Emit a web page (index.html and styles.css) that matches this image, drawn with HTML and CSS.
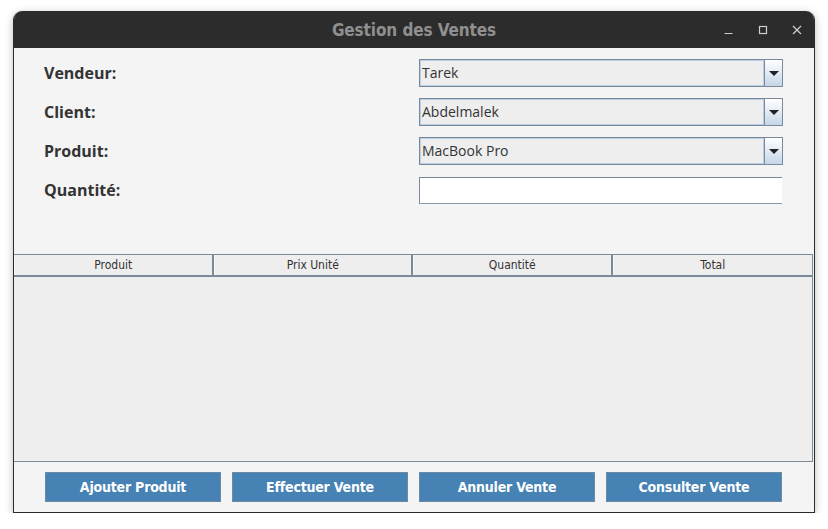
FILE: index.html
```html
<!DOCTYPE html>
<html lang="fr">
<head>
<meta charset="utf-8">
<title>Gestion des Ventes</title>
<link rel="stylesheet" href="styles.css">
</head>
<body>
<div class="window">
  <div class="titlebar">
    <span class="title">Gestion des Ventes</span>
    <div class="controls">
      <svg class="ctl" width="12" height="12" viewBox="0 0 12 12"><path d="M1.5 9.5h8" stroke="#cfcfcf" stroke-width="1.2"/></svg>
      <svg class="ctl" width="12" height="12" viewBox="0 0 12 12"><rect x="2.5" y="2.5" width="7" height="7" fill="none" stroke="#cfcfcf" stroke-width="1.2"/></svg>
      <svg class="ctl" width="12" height="12" viewBox="0 0 12 12"><path d="M2 2l8 8M10 2l-8 8" stroke="#cfcfcf" stroke-width="1.2"/></svg>
    </div>
  </div>
  <div class="content">
    <div class="form">
      <label class="lbl">Vendeur:</label>
      <div class="combo"><span class="combo-val">Tarek</span><span class="combo-btn"><span class="tri"></span></span></div>
      <label class="lbl">Client:</label>
      <div class="combo"><span class="combo-val">Abdelmalek</span><span class="combo-btn"><span class="tri"></span></span></div>
      <label class="lbl">Produit:</label>
      <div class="combo"><span class="combo-val">MacBook Pro</span><span class="combo-btn"><span class="tri"></span></span></div>
      <label class="lbl">Quantité:</label>
      <div class="field"></div>
    </div>
    <div class="table">
      <div class="thead">
        <div class="th">Produit</div>
        <div class="th">Prix Unité</div>
        <div class="th">Quantité</div>
        <div class="th">Total</div>
      </div>
      <div class="tbody"></div>
    </div>
    <div class="buttons">
      <button class="btn">Ajouter Produit</button>
      <button class="btn">Effectuer Vente</button>
      <button class="btn">Annuler Vente</button>
      <button class="btn">Consulter Vente</button>
    </div>
  </div>
</div>
</body>
</html>
```
FILE: styles.css
```css
html, body {
  margin: 0;
  padding: 0;
  background: #ffffff;
}
body {
  padding: 11px 0 0 13px;
  font-family: "Open Sans", sans-serif;
}
.window {
  width: 802px;
  height: 502px;
  box-sizing: border-box;
  border-radius: 9px 9px 0 0;
  background: #f4f4f4;
  border: 1px solid #2b2b2b;
  border-top: none;
  box-shadow: 0 2px 8px rgba(0,0,0,0.25);
  display: flex;
  flex-direction: column;
  overflow: hidden;
}
.titlebar {
  height: 37px;
  background: #2c2c2c;
  display: flex;
  align-items: center;
  justify-content: center;
  position: relative;
  margin: 0 -1px;
}
.title {
  font-family: "DejaVu Sans Condensed", "DejaVu Sans", sans-serif;
  font-weight: bold;
  font-size: 17px;
  color: #8f8f8f;
  letter-spacing: -0.1px;
}
.controls {
  position: absolute;
  right: 12px;
  top: 13px;
  display: flex;
  gap: 22px;
}
.ctl { display: block; }
.content {
  flex: 1;
  display: flex;
  flex-direction: column;
}
.form {
  display: grid;
  grid-template-columns: 375px 364px;
  grid-auto-rows: 28px;
  row-gap: 11px;
  padding: 11px 0 0 30px;
  align-items: center;
}
.lbl {
  font-weight: bold;
  font-size: 16px;
  color: #333333;
}
.combo {
  height: 28px;
  box-sizing: border-box;
  border: 1px solid #7a8a9b;
  display: flex;
  background: #eeeeee;
}
.combo-val {
  flex: 1;
  border: 1px solid #b8cfe5;
  font-size: 14px;
  color: #333333;
  line-height: 24px;
  padding-left: 1px;
}
.combo-btn {
  width: 17px;
  border-left: 1px solid #7a8a9b;
  background: linear-gradient(#ffffff, #c5d6e8);
  display: flex;
  align-items: center;
  justify-content: center;
}
.tri {
  width: 0;
  height: 0;
  border-left: 5px solid transparent;
  border-right: 5px solid transparent;
  border-top: 5px solid #222222;
}
.field {
  height: 27px;
  box-sizing: border-box;
  background: #ffffff;
  border-top: 1px solid #7a8a9b;
  border-left: 1px solid #7a8a9b;
  border-bottom: 1px solid #8a9aab;
  margin-right: 1px;
}
.table {
  margin-top: 50px;
  height: 207px;
  display: flex;
  flex-direction: column;
  border-right: 1px solid #7a8a9b;
  border-bottom: 1px solid #7a8a9b;
  margin-right: 1px;
}
.thead {
  display: grid;
  grid-template-columns: repeat(4, 1fr);
  height: 23px;
  box-sizing: border-box;
  border-top: 1px solid #7a8a9b;
  border-bottom: 2px solid #7a8a9b;
  background: #eeeeee;
}
.th {
  font-family: "DejaVu Sans Condensed", "DejaVu Sans", sans-serif;
  font-size: 12px;
  color: #333333;
  text-align: center;
  line-height: 20px;
  border-right: 2px solid #7a8a9b;
  border-left: 1px solid #f8f8f8;
}
.th:last-child { border-right: none; }
.tbody {
  flex: 1;
  background: #eeeeee;
}
.buttons {
  display: flex;
  gap: 11px;
  padding: 10px 0 0 31px;
}
.btn {
  width: 176px;
  height: 30px;
  background: #4682b4;
  border: 1px solid #6b8aa3;
  color: #ffffff;
  font-family: "DejaVu Sans Condensed", "DejaVu Sans", sans-serif;
  font-weight: bold;
  font-size: 14px;
  letter-spacing: -0.2px;
  padding: 0;
}
```
